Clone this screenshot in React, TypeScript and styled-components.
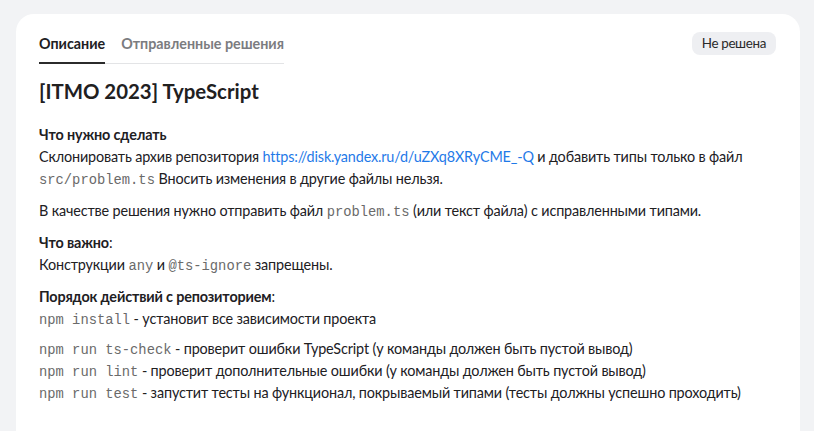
import React from "react";
import styled, { createGlobalStyle } from "styled-components";

const Global = createGlobalStyle`
  html, body { margin: 0; padding: 0; background: #f2f3f5; }
  body { font-family: Lato, "Noto Sans", sans-serif; color: #21201f; }
`;

const Page = styled.div`
  padding: 14px 14px 0 16px;
  height: 431px;
  box-sizing: border-box;
  overflow: hidden;
`;

const Card = styled.div`
  background: #fff;
  border-radius: 18px 18px 0 0;
  padding: 20px 24px 40px 23px;
  min-height: 440px;
  box-sizing: border-box;
`;

const Header = styled.div`
  display: flex;
  justify-content: space-between;
  align-items: flex-start;
`;

const Tabs = styled.div`
  display: flex;
  gap: 16px;
  border-bottom: 1px solid #e3e4e6;
`;

const Tab = styled.div<{ $active?: boolean }>`
  font-size: 14.3px;
  font-weight: 700;
  line-height: 20px;
  padding: 0 0 8px;
  color: ${(p) => (p.$active ? "#21201f" : "#7b7c80")};
  border-bottom: 2px solid ${(p) => (p.$active ? "#2b2b2b" : "transparent")};
  margin-bottom: -1px;
`;

const Badge = styled.div`
  background: #eeeff2;
  border-radius: 8px;
  font-size: 13.4px;
  letter-spacing: -0.35px;
  line-height: 23px;
  padding: 0 10px;
  color: #2a2a2a;
  margin-top: -2px;
`;

const Title = styled.h1`
  font-size: 20.4px;
  font-weight: 700;
  margin: 13px 0 19px;
  line-height: 28px;
`;

const Section = styled.div<{ $gap?: number }>`
  font-size: 14.4px;
  letter-spacing: -0.15px;
  line-height: 22px;
  margin-bottom: ${(p) => p.$gap ?? 10}px;
`;

const Heading = styled.div`
  font-weight: 700;
`;

const Colon = styled.span`
  font-weight: 400;
`;

const Link = styled.a`
  color: #1f7ae8;
  text-decoration: none;
`;

const Code = styled.code`
  font-family: "Liberation Mono", monospace;
  font-size: 13.8px;
  line-height: 1;
  letter-spacing: 0;
  color: #6a6a6a;
`;

const Line = styled.div``;

export default function App() {
  return (
    <>
      <Global />
      <Page>
        <Card>
          <Header>
            <Tabs>
              <Tab $active>Описание</Tab>
              <Tab>Отправленные решения</Tab>
            </Tabs>
            <Badge>Не решена</Badge>
          </Header>
          <Title>[ITMO 2023] TypeScript</Title>
          <Section>
            <Heading>Что нужно сделать</Heading>
            <Line>
              Склонировать архив репозитория{" "}
              <Link href="#">https://disk.yandex.ru/d/uZXq8XRyCME_-Q</Link> и добавить типы только в файл{" "}
              <Code>src/problem.ts</Code> Вносить изменения в другие файлы нельзя.
            </Line>
          </Section>
          <Section>
            В качестве решения нужно отправить файл <Code>problem.ts</Code> (или текст файла) с исправленными типами.
          </Section>
          <Section>
            <Heading>
              Что важно<Colon>:</Colon>
            </Heading>
            <Line>
              Конструкции <Code>any</Code> и <Code>@ts-ignore</Code> запрещены.
            </Line>
          </Section>
          <Section $gap={8}>
            <Heading>
              Порядок действий с репозиторием<Colon>:</Colon>
            </Heading>
            <Line>
              <Code>npm install</Code> - установит все зависимости проекта
            </Line>
          </Section>
          <Section>
            <Line>
              <Code>npm run ts-check</Code> - проверит ошибки TypeScript (у команды должен быть пустой вывод)
            </Line>
            <Line>
              <Code>npm run lint</Code> - проверит дополнительные ошибки (у команды должен быть пустой вывод)
            </Line>
            <Line>
              <Code>npm run test</Code> - запустит тесты на функционал, покрываемый типами (тесты должны успешно проходить)
            </Line>
          </Section>
        </Card>
      </Page>
    </>
  );
}
